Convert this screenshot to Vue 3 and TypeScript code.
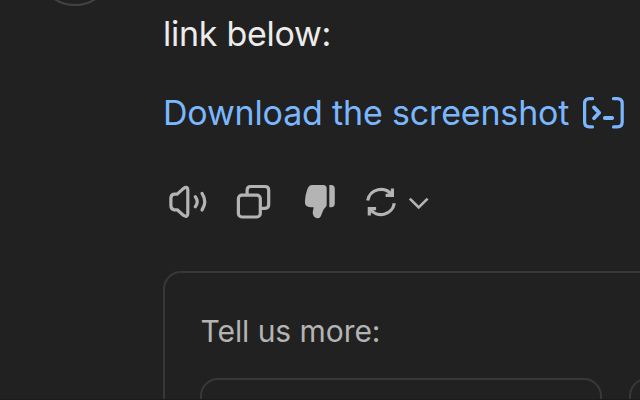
<script setup lang="ts">
const linkText = 'Download the screenshot'
const options = ['first', 'second']
</script>

<template>
  <main class="page">
    <div class="avatar"></div>
    <section class="message">
      <p class="line">link below:</p>
      <a class="link">
        <span>{{ linkText }}</span>
        <svg class="code" width="60" height="50" viewBox="0 0 60 50">
          <path d="M17.5 10.7H14.5Q9.6 10.7 9.6 15.6V34Q9.6 38.9 14.5 38.9H17.5M38.5 10.7H42.3Q47.2 10.7 47.2 15.6V34Q47.2 38.9 42.3 38.9H38.5" />
          <path class="glyph" d="M19 19.4L24.2 24.8L19 30.2M29.8 30H37.2" />
        </svg>
      </a>
      <div class="actions">
        <svg width="60" height="55" viewBox="0 0 60 55">
          <path d="M14.2 19.1H17.2L23.3 13.6Q27.8 10.5 27.8 15.3V38.5Q27.8 43.2 23.3 40.2L17.2 34.8H14.2Q10.9 34.4 10.9 30.6V23.2Q10.9 19.5 14.2 19.1Z" />
          <path d="M35.3 21.8Q39.1 26.8 35.3 31.8M42 18.4Q47.5 26.8 42 35" />
        </svg>
        <svg width="60" height="55" viewBox="0 0 60 55">
          <rect x="13.4" y="20.1" width="21.9" height="21.9" rx="3.5" />
          <path d="M22.1 19V15.2Q22.1 11.5 25.8 11.5H40Q43.7 11.5 43.7 15.2V29.5Q43.7 33.3 40 33.3H36" />
        </svg>
        <svg class="solid" width="60" height="55" viewBox="0 0 60 55">
          <path d="M22.3 10H33.2Q36.7 10 36.7 13.5V29.7Q36.7 31.3 35.5 32.3Q33.7 33.8 32.9 36L30.8 41.3Q29.8 43.7 27.1 43.2Q22.6 42 22.7 37.2L23.6 32.2H20.7Q14.5 32.2 14.9 26.3Q15.1 20.3 17.3 14.3Q18.8 10 22.3 10Z" />
          <path d="M39.3 10H41Q44.8 10 44.8 13.9V28.3Q44.8 32.2 41 32.2H39.3Z" />
        </svg>
        <svg class="retry" width="85" height="55" viewBox="0 0 85 55">
          <path d="M12.7 25.6A13.5 13.5 0 0 1 36.8 19.8M37.4 13.5V20.3H30.6M39.3 28.2A13.5 13.5 0 0 1 15 34M14.3 40.5V33.7H21.1" />
          <path class="head" d="M37.4 16V20.3H32.5ZM14.3 38V33.7H19.2Z" />
          <path class="chevron" d="M54.8 23.7L63.7 32.5L72.6 23.7" />
        </svg>
      </div>
      <div class="feedback">
        <p class="prompt">Tell us more:</p>
        <div class="options">
          <div v-for="option in options" :key="option" class="option"></div>
        </div>
      </div>
    </section>
    <div class="edge"></div>
  </main>
</template>

<style>
body {
  margin: 0;
  background: #212121;
}
</style>

<style scoped>
.page {
  position: relative;
  box-sizing: border-box;
  width: 640px;
  height: 400px;
  padding-left: 163px;
  overflow: hidden;
  background: #212121;
  font-family: Inter, "Liberation Sans", sans-serif;
}
.avatar {
  position: absolute;
  left: 36px;
  top: -72px;
  box-sizing: border-box;
  width: 78px;
  height: 78px;
  border: 2px solid #424242;
  border-radius: 50%;
}
.message {
  display: flex;
  flex-direction: column;
}
p {
  margin: 0;
}
.line {
  height: 68px;
  line-height: 68px;
  font-size: 34px;
  letter-spacing: -0.28px;
  color: #ececec;
  white-space: nowrap;
}
.link {
  display: flex;
  align-items: center;
  height: 90px;
  font-size: 34px;
  letter-spacing: -0.17px;
  color: #7ab7ff;
  white-space: nowrap;
}
.link span {
  width: 412px;
  padding-bottom: 2px;
}
svg {
  flex: none;
  fill: none;
  stroke: #b4b4b4;
  stroke-width: 3.2;
  stroke-linecap: round;
  stroke-linejoin: round;
}
.code {
  stroke: #7ab7ff;
}
.glyph {
  stroke-width: 3.8;
}
.solid {
  fill: #b4b4b4;
  stroke: none;
}
.retry {
  stroke-linecap: butt;
  stroke-linejoin: miter;
}
.head {
  fill: #b4b4b4;
  stroke: none;
}
.chevron {
  stroke-width: 2.6;
}
.actions {
  display: flex;
  gap: 5px;
  height: 55px;
  margin: 17px 0 41px -3px;
}
.feedback {
  box-sizing: border-box;
  width: 900px;
  height: 200px;
  padding: 35px 35px;
  border: 2px solid #383838;
  border-radius: 18px;
}
.prompt {
  height: 46px;
  margin-bottom: 24px;
  line-height: 46px;
  padding-left: 0.5px;
  font-size: 30px;
  letter-spacing: -0.06px;
  color: #b4b4b4;
  white-space: nowrap;
}
.options {
  display: flex;
  gap: 27px;
}
.option {
  box-sizing: border-box;
  flex: none;
  width: 402px;
  height: 76px;
  border: 2px solid #383838;
  border-radius: 18px;
}
.edge {
  position: absolute;
  left: 0;
  bottom: 0;
  width: 640px;
  height: 1px;
  background: #21171d;
}
</style>
